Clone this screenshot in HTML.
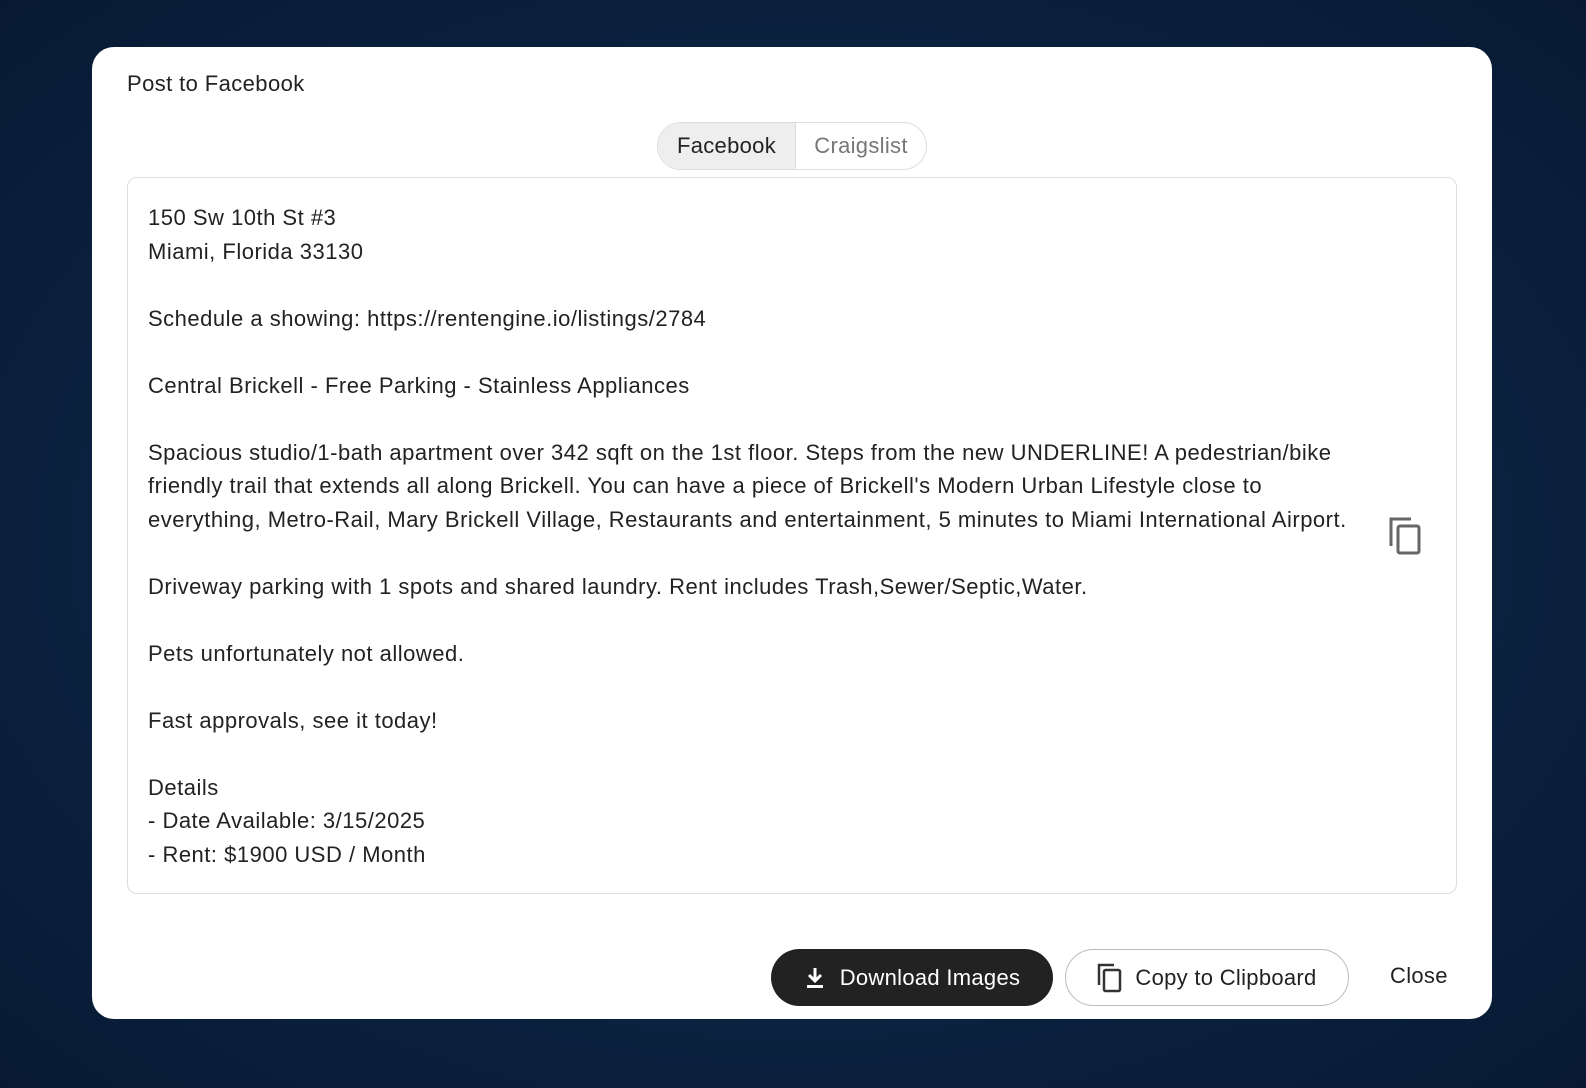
<!DOCTYPE html>
<html><head><style>
body{margin:0;width:1586px;height:1088px;background:radial-gradient(ellipse at 50% 50%,#12305a 0%,#0b2240 60%,#081a33 100%);font-family:"Liberation Sans",sans-serif;position:relative;overflow:hidden}
.modal{position:absolute;left:92px;top:47px;width:1400px;height:972px;background:#fff;border-radius:22px}
.title{position:absolute;left:35px;top:24px;font-size:22px;letter-spacing:0.4px;color:#222}
.tabs{position:absolute;left:565px;top:75px;width:268px;height:46px;border:1px solid #ddd;border-radius:24px;overflow:hidden;display:flex;font-size:22px;letter-spacing:0.3px}
.tabs div{display:flex;align-items:center;justify-content:center}
.t1{width:137px;background:#eee;color:#222;border-right:1px solid #ddd}
.t2{flex:1;color:#777}
.ta{position:absolute;left:35px;top:130px;width:1328px;height:715px;border:1px solid #ddd;border-radius:10px}
.txt{position:absolute;left:20px;top:23px;font-size:22px;line-height:33.5px;color:#222;white-space:pre;letter-spacing:0.5px}
.ci{position:absolute;left:1260px;top:338px}
.btn{position:absolute;top:902px;height:57px;border-radius:30px;display:flex;align-items:center;justify-content:center;font-size:22px;letter-spacing:0.3px;box-sizing:border-box}
.b1{left:679px;width:282px;background:#222;color:#fff}
.b2{left:973px;width:284px;border:1px solid #bbb;color:#222}
.close{position:absolute;left:1298px;top:916px;font-size:22px;letter-spacing:0.3px;color:#222}
</style></head><body>
<div class="modal">
<div class="title">Post to Facebook</div>
<div class="tabs"><div class="t1">Facebook</div><div class="t2">Craigslist</div></div>
<div class="ta"><div class="txt">150 Sw 10th St #3
Miami, Florida 33130

Schedule a showing: https://rentengine.io/listings/2784

Central Brickell - Free Parking - Stainless Appliances

Spacious studio/1-bath apartment over 342 sqft on the 1st floor. Steps from the new UNDERLINE! A pedestrian/bike
friendly trail that extends all along Brickell. You can have a piece of Brickell's Modern Urban Lifestyle close to
everything, Metro-Rail, Mary Brickell Village, Restaurants and entertainment, 5 minutes to Miami International Airport.

Driveway parking with 1 spots and shared laundry. Rent includes Trash,Sewer/Septic,Water.

Pets unfortunately not allowed.

Fast approvals, see it today!

Details
- Date Available: 3/15/2025
- Rent: $1900 USD / Month</div>
<svg class="ci" width="36" height="40" viewBox="0 0 36 40" fill="none" stroke="#666" stroke-width="3"><path d="M3 30V3h20"/><rect x="10" y="10" width="21" height="27" rx="2"/></svg>
</div>
<div class="btn b1"><svg width="22" height="24" viewBox="0 0 22 24" style="margin-right:14px"><path d="M11 2v12M5 9l6 6 6-6" stroke="#fff" stroke-width="3" fill="none"/><rect x="3" y="19" width="16" height="3" fill="#fff"/></svg>Download Images</div>
<div class="btn b2"><svg width="26" height="30" viewBox="0 0 26 30" fill="none" stroke="#333" stroke-width="2.5" style="margin-right:12px"><path d="M2 22V2h15"/><rect x="7" y="7" width="16" height="21" rx="1.5"/></svg>Copy to Clipboard</div>
<div class="close">Close</div>
</div>
</body></html>
